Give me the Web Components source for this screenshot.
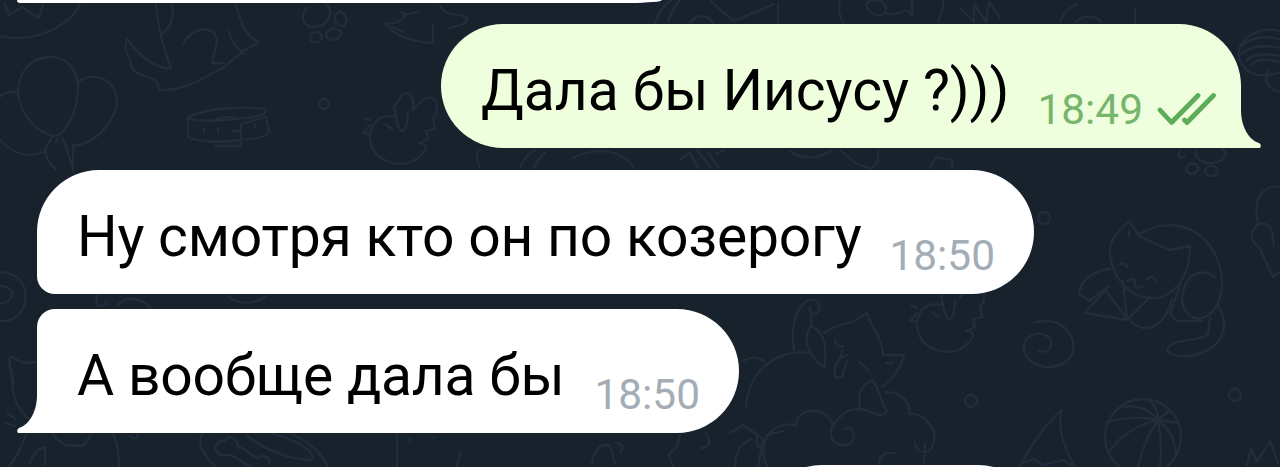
<!DOCTYPE html>
<html lang="ru">
<head>
<meta charset="utf-8">
<title>Чат</title>
<style>
    body { margin: 0; background: #18222d; overflow: hidden; }
</style>
</head>
<body>
<chat-view>
    <chat-bubble class="cut-top"></chat-bubble>
    <chat-bubble class="sent" side="out" time="18:49">Дала бы Иисусу ?)))</chat-bubble>
    <chat-bubble class="first" side="in" time="18:50">Ну смотря кто он по козерогу</chat-bubble>
    <chat-bubble class="last" side="in" tail time="18:50">А вообще дала бы</chat-bubble>
    <chat-bubble class="cut-bottom"></chat-bubble>
</chat-view>
<script>
class ChatWallpaper extends HTMLElement {
    constructor() {
        super();
        this.attachShadow({ mode: 'open' });
    }
    connectedCallback() {
        this.shadowRoot.innerHTML = `
            <style>
                :host { display: block; width: 1280px; height: 467px; background: #18222d; }
                svg { display: block; }
            </style>
            <svg width="1280" height="467" viewBox="0 0 1280 467" fill="none" stroke="#222d3c" stroke-width="2.3" stroke-linecap="round" stroke-linejoin="round">
                <!-- ball and balloons -->
                <path d="M0 36C30 43 67 30 80 4M5 4l4 11 13-8 17 11 4-14"/>
                <path d="M49 57C28 58 17 76 18 94c2 18 18 40 37 42 12-2 22-25 23-48 0-18-12-32-29-31z"/>
                <path d="M78 82c16-11 34-4 39 15 1 22-19 45-42 49M18 93C8 90 2 94-4 100M-2 138c15 17 31 20 46 14M53 136l-8 13 3 12 8 9M63 138l4 12 6 20M58 139l-2 3M73 145v24"/>
                <!-- dragon -->
                <path d="M156 4c2 27 9 47 15 65-18-2-31-12-44-30-5 15 5 18 4 26 2 11 18 10 26 17l2 8c29 1 44-13 64-22l18-15M172 4c3 12-2 26-10 29M236 4c5 18 7 30 23 38l-18 10M183 44c9-18 33-20 34-3l-5 22h12M229 31c2 12 8 16 15 23"/>
                <!-- paws -->
                <path d="M306 8c-12 20 14 24 22 12 6-13-2-14-4-18M338 12c-7 6-2 15 6 14 6-6-1-16-6-14zM310 36c4-6 12-5 12 2-2 5-13 7-12-2zM326 34c5-8 9-6 15-3 1 6-3 8-8 9-4-1-7-3-7-6z"/>
                <path d="M384 23c10 2 16-1 22-8l-5-3M384 23c11 13 28 19 49 20V24M404 15l14-3M392 27l12 5M440 6c6 12 22 6 27 12-1 8-12 8-18 10"/>
                <!-- collar -->
                <path d="M188 117c18-9 55-11 77-8 6 5-11 9-29 10-20 2-45 3-48-2v20c11 5 34 6 53 3v-16l25-7 3 15c-4 7-18 6-28 8M240 119c-12-4-25-2-25 3M216 141v5h25v-6"/>
                <path d="M204 129v4M218 128v4M232 131h8M255 124v4"/>
                <circle cx="324" cy="104" r="5"/><circle cx="1044" cy="218" r="6"/><circle cx="1235" cy="395" r="6"/><circle cx="971" cy="401" r="6"/>
                <!-- birds -->
                <path id="bird" d="M396 117c-20-5-29 12-25 26 4 21 36 28 50 12 5-4 9-12-2-12l9-4-2-8 9-2-2-11 3-3c5-21-9-23-23-5 2-20-10-21-15-9l-4 6 2 10c4 22 11 17 12-5M370 120l-6-2M370 125l-7 8 8 1M385 124l7 5"/>
                <use href="#bird" x="547" y="188"/>
                <!-- strips between the bubbles -->
                <path d="M655 23c3-10 8-17 16-23M668 22c3-9 7-16 12-22M690 23c6-9 17-9 23 0M710 0c7 8 15 14 24 21l40-17M778 22V4M840 0c-2 8-1 15 3 22M866 5c3-7 14-8 20 2 2 10-15 13-20-2zM886 13c9 4 16-3 22-2l4 5V0M943 0c1 9-2 16-5 22M960 8l14 14V4l12 18 3-20 11 16"/>
                <path d="M478 150c-2 7-1 13 2 18M520 168c3-8 8-14 15-18M534 168c3-7 7-12 12-16M573 158c19-10 47-11 61 10M680 160l10-8 8 16M697 150l14 18M708 152l11 16M716 154l8-4M790 151c12 9 28 8 40 0M840 150l14 12 16 7 8-7V150M930 168l6-11 16 3v12"/>
                <!-- yarn and paw -->
                <path d="M1060 22c4-10 8-14 17-18M1076 22c7-7 19-7 26 0M1135 8v15"/>
                <path d="M1282 32c-26-10-56 15-38 35 9 11 24 10 40 4M1239 48c10-10 25-14 43-8M1241 54c12-9 24-9 41-6M1246 61c7-7 17-8 36-5M1251 65c7-7 15-6 28-3M1268 70c-5 11 0 19 12 22"/>
                <path d="M1196 151c-2 15 28 17 30 1l-4-3M1180 151c-4 7 2 9 5 4M1186 168c6-8 13-4 12 2-5 6-10 5-12-2zM1205 170c5-8 14-3 13 3-6 5-12 4-13-3z"/>
                <!-- sleeping cat -->
                <path d="M1111 260c-6-18 10-32 18-39l10 15 30 14 21-4c0 27-11 44-28 51-23 5-45-9-51-37zM1138 235c20-13 55-18 76 17 14 27 8 55-7 64-11 7-25-1-25-18 3-26 20-30 33-21M1110 269c-18 2-30 12-31 25l10 7 20-15-24 27 42 7 23-23M1106 291l21 28-4-38M1130 321c20 18 37-1 42-22M1180 285l-10 29 7 7h25M1210 318l-2 16c-9 9-38 3-41 16 8 15 66 4 56-34l-5-11M1120 265c2-4 7 0 8 3M1147 280c2-5 8-3 9 1M1127 281l7-2 2 9M1137 288l7-2M1129 231v5"/>
                <!-- swirl -->
                <path d="M1034 323c25-8 42 10 39 28-5 18-35 22-46 6-10-16 5-27 18-22 12 5 6 20-6 16"/>
                <!-- striped ball -->
                <circle cx="1143" cy="437" r="38"/><path d="M1158 420c-9-13-27-16-40-12M1158 420c-18-4-36-2-51 2M1158 420c-20 5-36 13-48 31M1158 420c-11 16-18 32-21 54M1158 420c3 16 4 36 1 53M1158 420c11 9 17 18 18 36M1158 420c0-9-3-15-9-20M1158 420l21 3M1158 420l12-10"/>
                <path d="M1282 187c-22-3-29 14-24 37M1258 224c-12 13-3 20 1 23l14 30 8-6M1258 224c17-3 14 12 16 22M1020 467c8-18 24-42 42-57-6 20 4 41 13 57M1022 463l12-4 9 6 20-5 11 6M1247 465l4-16 6 13 13-21 8 22"/>
                <!-- cat on a cloud -->
                <path d="M794 350c-4-27 3-42 14-50 14-2 14 13 6 14-5-1-6-6-3-8M811 314v12c-10 15-2 30 14 42 0-17 3-34-14-42M824 333c10-8 20-8 30-12l13-8c3 14 15 22 16 42l21 0c-5 17-12 24-22 32M746 406c4-42 38-57 62-53M743 361c8-5 15-4 21 0M835 340c1 6 4 7 8 6M842 350c-2 7 1 9 5 5M841 357c-8 10-10 24 1 20l5-16M858 361l10 9M886 363l7 0M860 408c-2-13-1-22 12-28 8 8 8 22 15 31-6 9-17 0-27-3zM885 392c14 0 26 8 24 22 16-1 30 16 24 31-4 12-18 7-18-3M768 467c-12-17-1-47 28-42 1-18 30-20 37 0 10-13 18-18 28-15M833 425c-7 16 6 24 18 18 6-9 1-18-6-14M766 435l17-4M882 467c-6-5-2-15 12-14M730 433l13-8 20 14-5 28M735 467c1-18 7-24 16-28M757 437c-2 13 5 13 9 0M925 444l-1 18"/>
                <!-- lower left corner -->
                <path d="M0 272c40 1 30 61-8 47M0 286c19 1 14 18-2 17M14 383c-5-18-6-25-3-26l13 6 13-1M12 370c-2 22 5 40 18 50M7 413l9 6M5 423l10 3M98 295c-5 9 3 17 9 6M117 306c9-11 25-9 34 3M228 296c10 9 27 9 38 0"/>
                <path d="M27 433c-5 12-10 24-18 34M53 434c4 7 9 8 12 11l18 1 9-12M113 434c5 10 6 20 6 33M30 463c4-12 10-15 15-16v18M130 436c3 4 8 2 8-2"/>
                <path d="M203 433c-8 10 2 24 13 34M217 452c-5-8 4-12 8-11 2-7 13-3 12 4l20 13c6-4 14-1 12 6M217 452c4 6 10 2 14 3l20 12M246 435c18 14 41 24 66 25 4-9-19-22-40-26M292 434c15 7 29 18 36 33M397 434v33M410 438v3M434 437v1M461 452l-5 15"/>
                <path d="M680 434l-3 13-8 7 4 13M592 463c2-12 8-21 18-17l5 18M616 443c7 1 8 6 4 10M706 434c6 7 3 14-5 14"/>
            </svg>
        `;
    }
}
customElements.define('chat-wallpaper', ChatWallpaper);

class ChatView extends HTMLElement {
    constructor() {
        super();
        this.attachShadow({ mode: 'open' });
    }
    connectedCallback() {
        this.shadowRoot.innerHTML = `
            <style>
                :host {
                    display: grid;
                    width: 1280px;
                    height: 467px;
                    overflow: hidden;
                }
                /* wallpaper and messages share one grid cell */
                chat-wallpaper, .messages { grid-area: 1 / 1; }
                .messages {
                    display: flex;
                    flex-direction: column;
                    align-items: flex-start;
                    z-index: 1;
                    height: 467px;
                    overflow: hidden;
                }
                ::slotted(*) { flex-shrink: 0; }
                ::slotted(.cut-top) {
                    --height: 2.6px;
                    --radius: 0 0 32px 3px / 0 0 3px 3px;
                    width: 645px;
                    margin: 0 0 21.4px 17px;
                }
                ::slotted(.sent) {
                    --radius: 62px 62px 0 62px;
                    width: 800px;
                    margin: 0 0 21.500px 441px;
                }
                ::slotted(.first) {
                    --radius: 62px 62px 62px 18px;
                    width: 997px;
                    margin: 0 0 14.500px 37px;
                }
                ::slotted(.last) {
                    --radius: 18px 62px 62px 0;
                    width: 702px;
                    margin: 0 0 32px 37px;
                }
                ::slotted(.cut-bottom) {
                    --radius: 62px;
                    width: 280px;
                    margin-left: 760px;
                }
            </style>
            <chat-wallpaper></chat-wallpaper>
            <div class="messages"><slot></slot></div>
        `;
    }
}
customElements.define('chat-view', ChatView);

class ChatBubble extends HTMLElement {
    constructor() {
        super();
        this.attachShadow({ mode: 'open' });
    }
    connectedCallback() {
        const time = this.getAttribute('time') || '';
        const out = this.getAttribute('side') === 'out';
        const tail = out || this.hasAttribute('tail');

        this.shadowRoot.innerHTML = `
            <style>
                :host {
                    display: block;
                    position: relative;
                    box-sizing: border-box;
                    height: var(--height, 124.5px);
                    font-family: Roboto, "Liberation Sans", sans-serif;
                    color: #000;
                    --fill: #fff;
                    --meta: #a4acb5;
                }
                :host([side="out"]) {
                    --fill: #efffde;
                    --meta: #76b56c;
                }
                .bubble {
                    display: flex;
                    box-sizing: border-box;
                    height: 100%;
                    padding: 0 39px 0 40px;
                    justify-content: space-between;
                    background: var(--fill);
                    border-radius: var(--radius);
                    white-space: nowrap;
                }
                :host([side="out"]) .bubble { padding-right: 24px; }
                .text {
                    font-size: 57px;
                    line-height: 67px;
                    letter-spacing: -0.22px;
                    padding-top: 33px;
                }
                :host([side="out"]) .text {
                    letter-spacing: -0.06px;
                }
                .meta {
                    display: flex;
                    align-items: flex-start;
                    gap: 14px;
                    padding-top: 61px;
                    font-size: 42.4px;
                    line-height: 50px;
                    color: var(--meta);
                }
                .checks { margin-top: 7px; }
                .tail {
                    position: absolute;
                    bottom: 0;
                    left: -20px;
                    fill: var(--fill);
                }
                :host([side="out"]) .tail {
                    left: auto;
                    right: -20px;
                    transform: scaleX(-1);
                }
            </style>
            <div class="bubble">
                <div class="text"><slot></slot></div>
                ${time ? `
                <div class="meta">
                    <span>${time}</span>
                    ${out ? `
                    <svg class="checks" width="60" height="36" viewBox="0 0 60 36" fill="none" stroke="#5dac58" stroke-width="4.8" stroke-linecap="round" stroke-linejoin="round">
                        <path d="M3 18L14.500 30.500 41 3.500M27.500 28l2.500 2.500L56.500 3.500"/>
                    </svg>` : ''}
                </div>` : ''}
            </div>
            ${tail ? `
            <svg class="tail" width="22" height="64" viewBox="0 0 22 64">
                <path d="M20 0v26C20 43 12 56 2 59Q-1 61 1 64H22V0z"/>
            </svg>` : ''}
        `;
    }
}
customElements.define('chat-bubble', ChatBubble);
</script>
</body>
</html>
